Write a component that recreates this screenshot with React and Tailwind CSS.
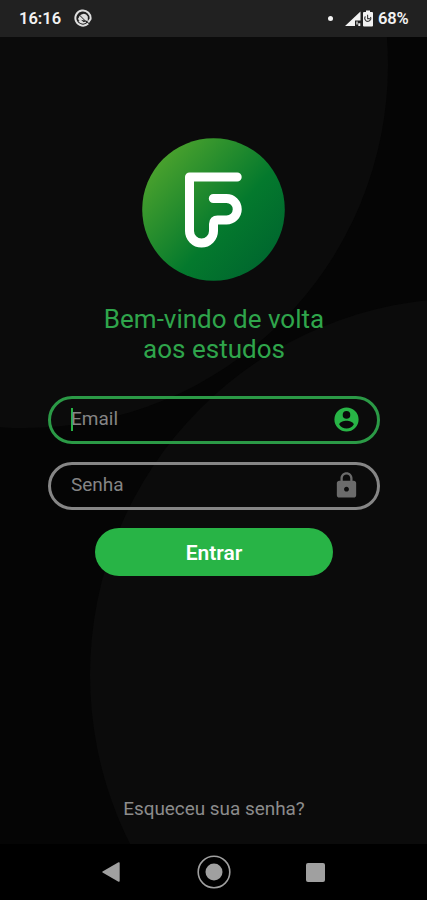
import React from 'react'
import { MdLock } from 'react-icons/md'

function StatusBar() {
  return (
    <header className="flex h-[37px] shrink-0 items-center justify-between bg-[#212121] pr-[17px] pl-[19px] text-[#f2f2f2]">
      <div className="flex items-center gap-[12px]">
        <span className="w-[43px] pt-[2px] text-[16.5px] leading-none font-semibold">16:16</span>
        <svg className="mb-[1px]" width="18" height="18" viewBox="0 0 18 18" fill="none" stroke="#dedede">
          <path d="M14.2 14.6A7.6 7.6 0 1 1 16.5 10.2L14.2 13.4" strokeWidth="2" />
          <path d="M4.8 10.4A4.8 4.8 0 0 1 13.8 7.5V12Z" fill="#dedede" stroke="none" />
          <path d="M5.2 5.8L13 13.6" stroke="#212121" strokeWidth="1" />
          <path d="M4.4 9.4L9.4 14M5 11.6A4.6 4.6 0 0 0 11.8 13" strokeWidth="1.5" />
        </svg>
      </div>
      <div className="flex items-center">
        <span className="mr-[12px] h-[5px] w-[5px] rounded-full bg-[#f2f2f2]" />
        <svg className="mr-[2px]" width="16" height="16" viewBox="0 0 16 16" fill="#f2f2f2">
          <path d="M0 15L15.5 0.5V9.5H10V15Z" />
          <path d="M11.4 10.5h1.2v3h-1.2zM13.3 12.3h2v2.7h-2z" />
        </svg>
        <svg className="mr-[5px] mb-[1px]" width="10" height="17" viewBox="0 0 10 17">
          <path d="M3 0.5H7V2H9Q10 2 10 3V15.5Q10 16.5 9 16.5H1Q0 16.5 0 15.5V3Q0 2 1 2H3Z" fill="#f2f2f2" />
          <path d="M2.4 6.4A3 3 0 1 0 7.5 7M4.6 4.8V8.6H6.8" fill="none" stroke="#3c3c3c" strokeWidth="1.1" />
        </svg>
        <span className="w-[32px] pt-[2px] text-[16.5px] leading-none font-semibold tracking-[-0.2px]">68%</span>
      </div>
    </header>
  )
}

function Backdrop() {
  return (
    <svg className="absolute inset-0" width="427" height="807" viewBox="0 37 427 807">
      <rect y="37" width="427" height="807" fill="#050505" />
      <circle cx="25" cy="65" r="363" fill="#0b0b0b" />
      <circle cx="467" cy="675" r="377" fill="#0b0b0b" />
    </svg>
  )
}

function Logo() {
  return (
    <svg className="mr-[1px]" width="143" height="143" viewBox="142.5 138 143 143">
      <defs>
        <linearGradient id="badge" x1="0.12" y1="0.16" x2="0.88" y2="0.84">
          <stop offset="0" stopColor="#49a12d" />
          <stop offset="0.62" stopColor="#04792d" />
          <stop offset="1" stopColor="#00682e" />
        </linearGradient>
      </defs>
      <circle cx="214" cy="209.5" r="71.3" fill="url(#badge)" />
      <path
        d="M237.7 177H190V231A12 12 0 0 0 214 231V224Q214 220 218 220H227A10.75 10.75 0 0 0 227 198.5H213.8"
        fill="none"
        stroke="white"
        strokeWidth="9"
        strokeLinecap="round"
        strokeLinejoin="round"
      />
    </svg>
  )
}

function AccountIcon() {
  return (
    <svg className="mr-[2px] mb-[1px]" width="25" height="25" viewBox="0 0 25 25">
      <path
        fill="#28b446"
        fillRule="evenodd"
        d="M12.5 0.4A12.1 12.1 0 1 1 12.5 24.6A12.1 12.1 0 1 1 12.5 0.4ZM12.5 4.1A3.8 3.8 0 1 0 12.5 11.7A3.8 3.8 0 1 0 12.5 4.1ZM5.2 17.4C6.8 20 9.5 21.4 12.5 21.4S18.2 20 19.8 17.4C19.3 15 15.5 13.8 12.5 13.8S5.7 15 5.2 17.4Z"
      />
    </svg>
  )
}

export default function App() {
  return (
    <div className="flex h-[900px] w-[427px] flex-col overflow-hidden bg-black font-['Roboto',sans-serif]">
      <StatusBar />

      <main className="relative h-[807px] shrink-0">
        <Backdrop />
        <div className="relative flex h-full flex-col items-center pt-[101px] pl-[1px]">
          <Logo />
          <h1 className="mt-[23px] text-center text-[26px] leading-[30px] font-normal text-[#2fa54b]">
            Bem-vindo de volta
            <br />
            aos estudos
          </h1>

          <div className="mt-[32px] flex h-[48px] w-[332px] items-center justify-between rounded-full border-3 border-[#2b9a46] pr-[16px] pl-[20px]">
            <div className="flex items-center pb-[2px]">
              <span className="mr-[-2px] h-[23px] w-[2px] bg-[#28b446]" />
              <span className="pb-[2px] text-[19px] leading-none text-[#858585]">Email</span>
            </div>
            <AccountIcon />
          </div>

          <div className="mt-[18px] flex h-[48px] w-[332px] items-center justify-between rounded-full border-3 border-[#868686] pr-[16px] pl-[20px]">
            <span className="pb-[3px] text-[19px] leading-none text-[#858585]">Senha</span>
            <MdLock className="mb-[1px] h-[29px] w-[29px] text-[#6b6b6b]" />
          </div>

          <button className="mt-[18px] h-[48px] w-[238px] rounded-full bg-[#28b446] pt-[3px] text-[21px] font-semibold text-white">
            Entrar
          </button>

          <a className="mt-auto mb-[24px] text-[18.9px] leading-[22px] text-[#8c8c8c]">Esqueceu sua senha?</a>
        </div>
      </main>

      <nav className="flex h-[56px] shrink-0 items-center bg-black">
        <svg className="ml-[102px]" width="18" height="20" viewBox="0 0 18 20" fill="#a0a0a0">
          <path d="M0.5 9.5Q0 10 0.5 10.5L16.5 19.7Q17.7 20 17.7 19V1Q17.7 0 16.5 0.3Z" />
        </svg>
        <svg className="ml-[77px]" width="34" height="34" viewBox="0 0 34 34">
          <circle cx="17" cy="17" r="15.8" fill="none" stroke="#a0a0a0" strokeWidth="1.6" />
          <circle cx="17" cy="17" r="8.5" fill="#a0a0a0" />
        </svg>
        <span className="ml-[75px] h-[19px] w-[19px] rounded-[2px] bg-[#a0a0a0]" />
      </nav>
    </div>
  )
}
